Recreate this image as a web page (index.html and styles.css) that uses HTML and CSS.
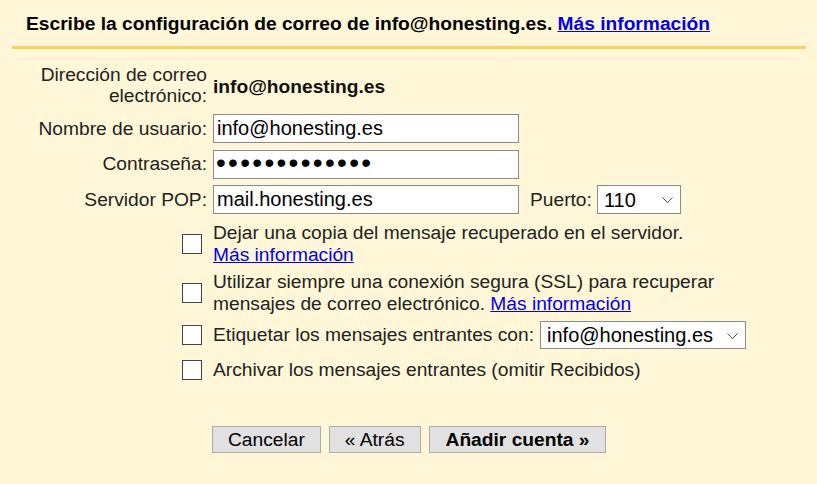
FILE: index.html
```html
<!DOCTYPE html>
<html lang="es">
<head>
    <meta charset="UTF-8">
    <title>Configuración de correo</title>
    <link rel="stylesheet" href="styles.css">
</head>
<body>
    <!-- Header -->
    <div class="title">Escribe la configuración de correo de info@honesting.es. <a href="#">Más información</a></div>

    <!-- Form -->
    <form class="form" action="#" onsubmit="return false">
        <div class="row row-address">
            <div class="label">Dirección de correo<br>electrónico:</div>
            <div class="value">info@honesting.es</div>
        </div>

        <div class="row row-field row-first">
            <label class="label" for="username">Nombre de usuario:</label>
            <div class="field"><input type="text" id="username" class="text" value="info@honesting.es"></div>
        </div>

        <div class="row row-field">
            <label class="label" for="password">Contraseña:</label>
            <div class="field"><input type="password" id="password" class="text password" value="honesting2019"></div>
        </div>

        <div class="row row-field">
            <label class="label" for="server">Servidor POP:</label>
            <div class="field">
                <input type="text" id="server" class="text" value="mail.honesting.es">
                <label class="port-label" for="port">Puerto:</label>
                <span class="select-wrap port">
                    <select id="port"><option>110</option><option>995</option></select>
                    <svg class="chevron" width="11" height="6" viewBox="0 0 11 6"><polyline points="0.5,0.5 5.5,5.5 10.5,0.5" fill="none" stroke="#555" stroke-width="1"/></svg>
                </span>
            </div>
        </div>

        <div class="row row-check check-1">
            <div class="check-cell"><input type="checkbox" class="checkbox" id="leave_copy"></div>
            <label class="check-text" for="leave_copy">Dejar una copia del mensaje recuperado en el servidor.<br><a href="#">Más información</a></label>
        </div>

        <div class="row row-check check-2">
            <div class="check-cell"><input type="checkbox" class="checkbox" id="use_ssl"></div>
            <label class="check-text" for="use_ssl">Utilizar siempre una conexión segura (SSL) para recuperar<br>mensajes de correo electrónico. <a href="#">Más información</a></label>
        </div>

        <div class="row row-check check-3">
            <div class="check-cell"><input type="checkbox" class="checkbox" id="use_label"></div>
            <div class="check-text field">
                <label for="use_label">Etiquetar los mensajes entrantes con:</label>
                <span class="select-wrap label-select">
                    <select><option>info@honesting.es</option></select>
                    <svg class="chevron" width="11" height="6" viewBox="0 0 11 6"><polyline points="0.5,0.5 5.5,5.5 10.5,0.5" fill="none" stroke="#555" stroke-width="1"/></svg>
                </span>
            </div>
        </div>

        <div class="row row-check check-4">
            <div class="check-cell"><input type="checkbox" class="checkbox" id="archive"></div>
            <label class="check-text" for="archive">Archivar los mensajes entrantes (omitir Recibidos)</label>
        </div>

        <!-- Buttons -->
        <div class="row row-buttons">
            <div></div>
            <div class="buttons">
                <button type="button" class="button">Cancelar</button>
                <button type="button" class="button">« Atrás</button>
                <button type="submit" class="button primary">Añadir cuenta »</button>
            </div>
        </div>
    </form>
</body>
</html>
```

FILE: styles.css
```css
body {
    margin: 0;
    background-color: #fff7d7;
    font-family: "Liberation Sans", Arial, sans-serif;
    font-size: 19.2px;
    color: #222;
}

a {
    color: #0000ee;
}

/* Header with yellow rule */
.title {
    margin: 0 11px 0 12px;
    padding: 13px 14px 11px;
    border-bottom: 3px solid #f9d35f;
    font-weight: bold;
    line-height: 22px;
    color: #000;
}

.form {
    margin: 0;
}

.row {
    display: grid;
    grid-template-columns: 207px auto;
    column-gap: 6px;
    align-items: center;
}

.label {
    text-align: right;
    line-height: 22px;
}

.row-address {
    margin-top: 15px;
}

.row-address .label {
    line-height: 21px;
}

.value {
    font-weight: bold;
    color: #111;
    padding-top: 3px;
}

.row-field {
    margin-top: 6.5px;
}

.row-first {
    margin-top: 8px;
}

.field {
    display: flex;
    align-items: center;
}

.text {
    box-sizing: border-box;
    width: 306px;
    height: 29px;
    margin: 0;
    padding: 0 3px;
    border: 1px solid #8c8c8c;
    border-radius: 0;
    background: #fff;
    font-family: "Liberation Sans", Arial, sans-serif;
    font-size: 20px;
    color: #000;
}

.password {
    font-size: 28px;
    letter-spacing: 2.3px;
    padding: 0 2px 2px;
}

.port-label {
    margin: 0 5px 0 11px;
}

/* Selects with a drawn chevron */
.select-wrap {
    position: relative;
    display: inline-block;
}

select {
    appearance: none;
    -webkit-appearance: none;
    box-sizing: border-box;
    height: 29px;
    margin: 0;
    padding: 0 6px;
    border: 1px solid #8c8c8c;
    border-radius: 0;
    background: #fff;
    font-family: "Liberation Sans", Arial, sans-serif;
    font-size: 20px;
    color: #000;
    display: block;
}

.port select {
    width: 84px;
}

.label-select {
    margin-left: 6px;
}

.label-select select {
    width: 206px;
    height: 28px;
}

.chevron {
    position: absolute;
    right: 8px;
    top: 12px;
}

/* Checkbox rows */
.check-cell {
    justify-self: end;
    margin-right: 5px;
    display: flex;
}

.checkbox {
    appearance: none;
    -webkit-appearance: none;
    width: 20px;
    height: 20px;
    margin: 0;
    border: 1px solid #444;
    border-radius: 0;
    background: #fff;
}

.check-text {
    line-height: 22px;
}

.check-1 {
    margin-top: 8px;
}

.check-2 {
    margin-top: 5px;
}

.check-3 {
    margin-top: 6px;
}

.check-4 {
    margin-top: 10px;
}

/* Buttons */
.row-buttons {
    margin-top: 45px;
}

.buttons {
    display: flex;
    gap: 8px;
    margin-left: -1px;
}

.button {
    box-sizing: border-box;
    height: 27px;
    margin: 0;
    padding: 0 15px;
    border: 1px solid #adadad;
    border-radius: 0;
    background: #e1e1e1;
    font-family: "Liberation Sans", Arial, sans-serif;
    font-size: 19.2px;
    color: #000;
}

.primary {
    font-weight: bold;
    padding: 0 16px;
}
```
